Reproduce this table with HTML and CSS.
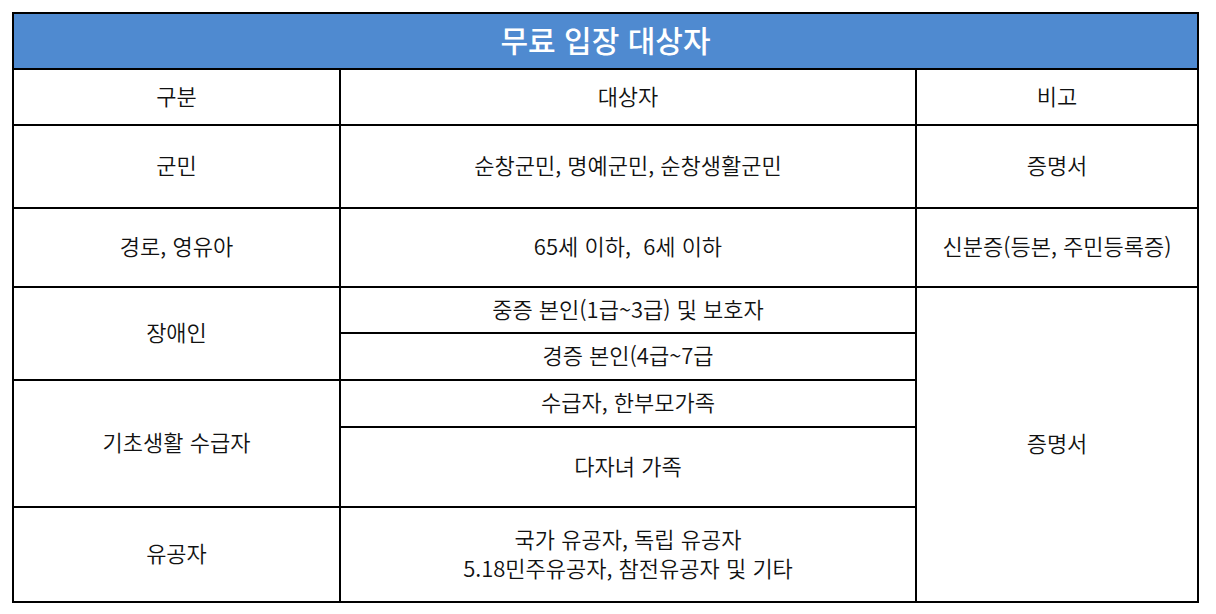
FILE: index.html
```html
<!DOCTYPE html>
<html lang="ko">
<head>
<meta charset="utf-8">
<link rel="stylesheet" href="styles.css">
</head>
<body>
<table class="tbl">
  <colgroup>
    <col class="c1"><col class="c2"><col class="c3">
  </colgroup>
  <tr class="r-title"><th colspan="3" class="title">무료 입장 대상자</th></tr>
  <tr class="r-head"><td>구분</td><td>대상자</td><td>비고</td></tr>
  <tr class="r-a"><td>군민</td><td>순창군민, 명예군민, 순창생활군민</td><td>증명서</td></tr>
  <tr class="r-b"><td>경로, 영유아</td><td>65세 이하,&nbsp; 6세 이하</td><td>신분증(등본, 주민등록증)</td></tr>
  <tr class="r-c"><td rowspan="2">장애인</td><td>중증 본인(1급~3급) 및 보호자</td><td rowspan="6">증명서</td></tr>
  <tr class="r-d"><td>경증 본인(4급~7급</td></tr>
  <tr class="r-e"><td rowspan="2">기초생활 수급자</td><td>수급자, 한부모가족</td></tr>
  <tr class="r-f"><td>다자녀 가족</td></tr>
  <tr class="r-g"><td>유공자</td><td class="two">국가 유공자, 독립 유공자<br>5.18민주유공자, 참전유공자 및 기타</td></tr>
</table>
</body>
</html>
```
FILE: styles.css
```css
html, body {
  margin: 0;
  padding: 0;
  background: #fff;
}
body {
  padding: 12px 0 0 12px;
  font-family: "Noto Sans CJK KR", "Noto Sans", sans-serif;
  color: #111;
}
.tbl {
  border-collapse: collapse;
  width: 1187px;
  table-layout: fixed;
}
.c1 { width: 327px; }
.c2 { width: 576px; }
.c3 { width: 282px; }
.tbl th, .tbl td {
  border: 2px solid #000;
  padding: 0 0 4px 0;
  text-align: center;
  vertical-align: middle;
  font-size: 22px;
  line-height: 29px;
  font-weight: 350;
}
.tbl .two {
  line-height: 29px;
}
.tbl .title {
  background: #4f8ad0;
  color: #fff;
  font-size: 30px;
  font-weight: 500;
  line-height: 36px;
}
.r-title { height: 56px; }
.r-head { height: 56px; }
.r-a { height: 83px; }
.r-b { height: 79px; }
.r-c { height: 46px; }
.r-d { height: 47px; }
.r-e { height: 47px; }
.r-f { height: 80px; }
.r-g { height: 95px; }
```
